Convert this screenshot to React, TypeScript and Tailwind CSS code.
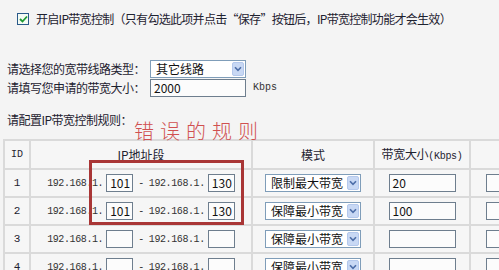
import React from 'react';

const cjk = '"Noto Sans CJK SC", "Noto Sans", sans-serif';
const mono = '"Liberation Mono", "DejaVu Sans Mono", monospace';

function Arrow() {
  return (
    <span className="flex items-center justify-center w-[12px] h-[14px] bg-[#c8d8f4] border border-[#b4c8ec] rounded-[2px]">
      <svg width="8" height="6" viewBox="0 0 8 6">
        <path d="M1 1.2 L4 4.4 L7 1.2" fill="none" stroke="#4d6ea8" strokeWidth="1.6" />
      </svg>
    </span>
  );
}

function Select({ value, width }: { value: string; width: string }) {
  return (
    <div className={`${width} h-[18px] bg-white border border-[#7f9db9] flex items-center justify-between pl-[5px] pr-[1px]`}>
      <span className="text-[12px] text-[#111] leading-none">{value}</span>
      <Arrow />
    </div>
  );
}

function Box({ value, width }: { value?: string; width: string }) {
  return (
    <div
      className={`${width} h-[18px] bg-[#fcfcfc] border border-[#6e7e8e] flex items-center pl-[3px] text-[12px] text-[#111] leading-none tracking-normal`}
      style={{ fontFamily: cjk }}
    >
      {value}
    </div>
  );
}

const rules = [
  { id: 1, start: '101', end: '130', mode: '限制最大带宽', bw: '20' },
  { id: 2, start: '101', end: '130', mode: '保障最小带宽', bw: '100' },
  { id: 3, start: '', end: '', mode: '保障最小带宽', bw: '' },
  { id: 4, start: '', end: '', mode: '保障最小带宽', bw: '' },
];

export default function App() {
  const cell = 'border-2 border-[#dadada] p-0';
  return (
    <div className="relative w-[499px] h-[270px] overflow-hidden bg-[#f4f4f4] text-[#1e2230]" style={{ fontFamily: cjk }}>
      <div className="flex items-center pl-[17px] pt-[12px]">
        <div className="w-[12px] h-[12px] border border-[#2a5a8a] bg-[#f4fbf4] flex items-center justify-center">
          <svg width="9" height="8" viewBox="0 0 9 8">
            <path d="M1 4 L3.5 6.5 L8 1.5" fill="none" stroke="#1e9a32" strokeWidth="1.8" />
          </svg>
        </div>
        <span className="ml-[7px] text-[12px] leading-[14px] tracking-[-0.7px]">
          开启IP带宽控制（只有勾选此项并点击“保存”按钮后，IP带宽控制功能才会生效）
        </span>
      </div>

      <div className="pl-[7px] mt-[34px] flex flex-col gap-[1px]">
        <div className="flex items-center">
          <span className="w-[143px] text-[12px] leading-none tracking-[-0.5px]">请选择您的宽带线路类型：</span>
          <Select value="其它线路" width="w-[96px]" />
        </div>
        <div className="flex items-center">
          <span className="w-[143px] text-[12px] leading-none tracking-[-0.5px]">请填写您申请的带宽大小：</span>
          <Box value="2000" width="w-[96px]" />
          <span className="ml-[7px] text-[10px] leading-none text-[#333]" style={{ fontFamily: mono }}>Kbps</span>
        </div>
      </div>

      <div className="pl-[7px] mt-[16px] text-[12px] leading-[14px] tracking-[-0.5px]">请配置IP带宽控制规则：</div>

      <table className="mt-[12px] ml-[3px] border-collapse table-fixed w-[560px] bg-[#f6f6f6]">
        <colgroup>
          <col className="w-[26px]" />
          <col className="w-[222px]" />
          <col className="w-[122px]" />
          <col className="w-[96px]" />
          <col className="w-[94px]" />
        </colgroup>
        <thead>
          <tr className="h-[29px]">
            <th className={`${cell} text-[10px] font-normal`} style={{ fontFamily: mono }}>ID</th>
            <th className={`${cell} text-[12px] font-normal`}>IP地址段</th>
            <th className={`${cell} text-[12px] font-normal`}>模式</th>
            <th className={`${cell} text-[12px] font-normal tracking-[-0.3px]`}>
              带宽大小<span className="text-[10px]" style={{ fontFamily: mono }}>(Kbps)</span>
            </th>
            <th className={cell}></th>
          </tr>
        </thead>
        <tbody>
          {rules.map((r) => (
            <tr key={r.id} className="h-[28px]">
              <td className={`${cell} text-[11px] text-center`} style={{ fontFamily: mono }}>{r.id}</td>
              <td className={cell}>
                <div className="flex items-center justify-center text-[10px] tracking-[-0.4px] text-[#333]" style={{ fontFamily: mono }}>
                  <span>192.168.1.</span>
                  <span className="ml-[3px]"><Box value={r.start} width="w-[27px]" /></span>
                  <span className="mx-[5px]">-</span>
                  <span>192.168.1.</span>
                  <span className="ml-[3px]"><Box value={r.end} width="w-[27px]" /></span>
                </div>
              </td>
              <td className={cell}>
                <div className="flex justify-center">
                  <Select value={r.mode} width="w-[96px]" />
                </div>
              </td>
              <td className={cell}>
                <div className="flex justify-center">
                  <Box value={r.bw} width="w-[67px]" />
                </div>
              </td>
              <td className={cell}>
                <div className="pl-[15px]">
                  <Box width="w-[67px]" />
                </div>
              </td>
            </tr>
          ))}
        </tbody>
      </table>

      <div className="absolute left-[134px] top-[121px] text-[20px] font-light leading-none tracking-[6px] text-[#d05050]">错误的规则</div>
      <div className="absolute left-[89px] top-[160px] w-[155px] h-[65px] border-[3px] border-[#a93636]"></div>
    </div>
  );
}
